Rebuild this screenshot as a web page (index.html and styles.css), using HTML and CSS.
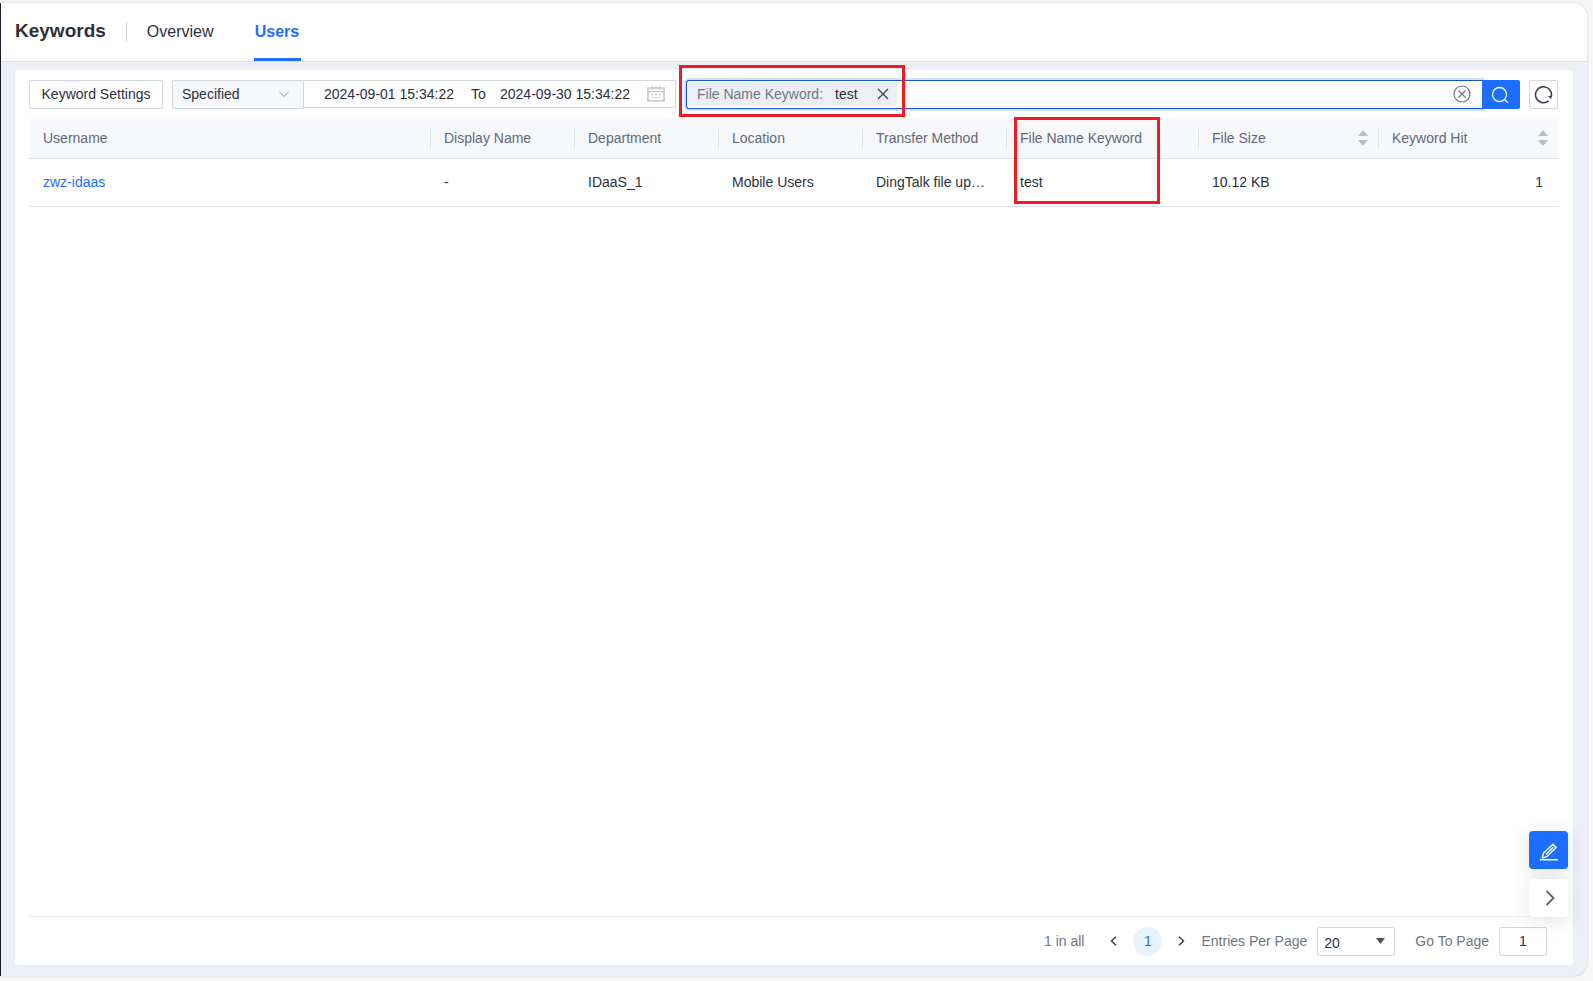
FILE: index.html
```html
<!DOCTYPE html>
<html lang="en">
<head>
<meta charset="utf-8">
<title>Keywords - Users</title>
<link rel="stylesheet" href="styles.css">
</head>
<body>
<div class="app">
  <header class="topbar">
    <h1 class="topbar-title">Keywords</h1>
    <nav class="tabs">
      <a class="tab" href="#overview">Overview</a>
      <a class="tab tab-active" href="#users" aria-current="page">Users</a>
    </nav>
  </header>

  <main class="panel">
    <form class="toolbar">
      <button class="btn" type="button">Keyword Settings</button>

      <div class="period">
        <div class="period-type">
          <select class="period-select" aria-label="Period">
            <option>Specified</option>
          </select>
          <svg class="period-arrow" width="10" height="7" viewBox="0 0 10 7" fill="none" stroke="#b9bdc6" stroke-width="1.2"><path d="M.5 1 5 5.5 9.5 1"/></svg>
        </div>
        <div class="range">
          <input class="range-input" type="text" value="2024-09-01 15:34:22" aria-label="Start time">
          <span class="range-to">To</span>
          <input class="range-input" type="text" value="2024-09-30 15:34:22" aria-label="End time">
          <svg class="range-icon" width="18" height="18" viewBox="0 0 18 18" fill="none" stroke="#c5c7cc"><path d="M1 3h16v13H1z" stroke-width="1.6"/><path d="M1 6.5h16M5.5 1v4M12.5 1v4M9 1v3" stroke-width="1.2"/><path d="M4 9.5h2.4M7.8 9.5h2.4M11.6 9.5H14M4 12.5h2.4M7.8 12.5h2.4M11.6 12.5H14"/></svg>
        </div>
      </div>

      <div class="search">
        <div class="search-field">
          <span class="tag">
            <span class="tag-name">File Name Keyword:</span>
            <span class="tag-value">test</span>
            <button class="icon-btn" type="button" aria-label="Remove filter">
              <svg width="12" height="12" viewBox="0 0 12 12" fill="none" stroke="#3b404c" stroke-width="1.2"><path d="M1 1l10 10M11 1 1 11"/></svg>
            </button>
            <span class="mark mark-tag"></span>
          </span>
          <input class="search-input" type="text" aria-label="Search">
          <button class="icon-btn" type="button" aria-label="Clear search">
            <svg width="18" height="18" viewBox="0 0 18 18" fill="none" stroke="#6d7380" stroke-width="1.2"><circle cx="9" cy="9" r="8"/><path d="M5.5 5.5l7 7M12.5 5.5l-7 7"/></svg>
          </button>
        </div>
        <button class="search-btn" type="button" aria-label="Search">
          <svg width="18" height="18" viewBox="0 0 18 18" fill="none" stroke="#fff" stroke-width="1.3"><circle cx="8.5" cy="8.5" r="7"/><path d="M13.5 13.5 17 16.8"/></svg>
        </button>
      </div>

      <button class="refresh" type="button" aria-label="Refresh">
        <svg width="19" height="19" viewBox="0 0 19 19"><path d="M14.6 15.9A8 8 0 1 1 17.4 11" fill="none" stroke="#3b404c" stroke-width="1.5"/><path d="M13.8 11.2 18.2 10.6 17 14z" fill="#3b404c"/></svg>
      </button>
    </form>

    <div class="table-area">
      <table class="table">
        <colgroup>
          <col>
          <col class="col-s"><col class="col-s"><col class="col-s"><col class="col-s">
          <col class="col-l"><col class="col-m"><col class="col-m">
        </colgroup>
        <thead>
          <tr>
            <th>Username</th>
            <th>Display Name</th>
            <th>Department</th>
            <th>Location</th>
            <th>Transfer Method</th>
            <th class="marked">File Name Keyword<span class="mark mark-column"></span></th>
            <th><div class="sortable">File Size
              <button class="icon-btn" type="button" aria-label="Sort by file size"><svg width="10" height="16" viewBox="0 0 10 16" fill="#b9bdc6"><path d="M0 6 5 0l5 6zM0 10h10l-5 6z"/></svg></button></div></th>
            <th><div class="sortable">Keyword Hit
              <button class="icon-btn" type="button" aria-label="Sort by keyword hit"><svg width="10" height="16" viewBox="0 0 10 16" fill="#b9bdc6"><path d="M0 6 5 0l5 6zM0 10h10l-5 6z"/></svg></button></div></th>
          </tr>
        </thead>
        <tbody>
          <tr>
            <td><a class="link" href="#zwz-idaas">zwz-idaas</a></td>
            <td>-</td>
            <td>IDaaS_1</td>
            <td>Mobile Users</td>
            <td>DingTalk file upload</td>
            <td>test</td>
            <td>10.12 KB</td>
            <td class="num">1</td>
          </tr>
        </tbody>
      </table>
    </div>

    <footer class="pager">
      <span class="pager-total">1 in all</span>
      <nav class="pages">
        <button class="icon-btn page-step" type="button" aria-label="Previous page"><svg width="7" height="10" viewBox="0 0 7 10" fill="none" stroke="#3b404c" stroke-width="1.5"><path d="M6 .7 1.5 5 6 9.3"/></svg></button>
        <button class="page" type="button">1</button>
        <button class="icon-btn page-step" type="button" aria-label="Next page"><svg width="7" height="10" viewBox="0 0 7 10" fill="none" stroke="#3b404c" stroke-width="1.5"><path d="M1 .7 5.5 5 1 9.3"/></svg></button>
      </nav>
      <label for="per-page">Entries Per Page</label>
      <div class="size">
        <select class="size-select" id="per-page"><option>20</option></select>
        <svg class="size-arrow" width="9" height="6" viewBox="0 0 9 6" fill="#4b505c"><path d="M0 0h9L4.500 6z"/></svg>
      </div>
      <label class="goto-label" for="goto">Go To Page</label>
      <input class="goto" id="goto" type="text" value="1">
    </footer>

    <aside class="float">
      <button class="float-btn float-primary" type="button" aria-label="Feedback">
        <svg width="18" height="18" viewBox="0 0 18 18" fill="none" stroke="#fff" stroke-width="1.4" stroke-linejoin="round"><path d="M2.200 15l1.300-5L13 1.200l3.200 3.200-9.300 9.200zM6 11.300l7.400-7.200M0 16.700h18"/></svg>
      </button>
      <button class="float-btn" type="button" aria-label="Collapse">
        <svg width="10" height="16" viewBox="0 0 10 16" fill="none" stroke="#5d6370" stroke-width="1.8"><path d="M1.5 1 8.500 8l-7 7"/></svg>
      </button>
    </aside>
  </main>
</div>
</body>
</html>
```
FILE: styles.css
```css
* { box-sizing: border-box; }

body {
  margin: 0;
  height: 100vh;
  padding: 3px 6px 5px 0;
  display: flex;
  background: #f6f6f6;
  color: #2b303b;
  font: 14px/20px "Liberation Sans", Arial, sans-serif;
}

button, input, select { font: inherit; color: inherit; }
button { cursor: pointer; }
svg { display: block; flex: none; }

.app {
  flex: 1;
  min-width: 0;
  display: flex;
  flex-direction: column;
  background: #eceff8;
  border-left: 1px solid #1b1d29;
  border-radius: 0 14px 14px 0;
  box-shadow: 0 0 2px #b8bac0;
}

/* Top bar */
.topbar {
  flex: none;
  height: 59px;
  padding-left: 14px;
  display: flex;
  align-items: stretch;
  background: #fff;
  border-bottom: 1px solid #dfe2e8;
  border-radius: 0 14px 0 0;
}
.topbar-title {
  margin: 0;
  font-size: 19px;
  line-height: 55px;
}
.tabs {
  display: flex;
  gap: 40px;
  margin-left: 20px;
  padding-left: 21px;
  background: linear-gradient(#d3d6de, #d3d6de) 0 19px / 1px 19px no-repeat;
}
.tab {
  color: inherit;
  font-size: 16px;
  line-height: 57px;
  text-decoration: none;
}
.tab-active {
  min-width: 47px;
  color: #1c6eff;
  font-weight: bold;
  text-align: center;
  border-bottom: 3px solid #1c6eff;
  border-radius: 2px 2px 0 0;
}

/* Content panel */
.panel {
  position: relative;
  flex: 1;
  min-height: 0;
  margin: 8px 14px 11px;
  padding: 10px 15px 0 14px;
  display: flex;
  flex-direction: column;
  background: #fff;
  border-radius: 4px;
}

/* Filters */
.toolbar { display: flex; gap: 9px; margin-bottom: 10px; }
.btn, .refresh {
  height: 29px;
  background: #fff;
  border: 1px solid #d3d6de;
  border-radius: 2px;
}
.btn { width: 134px; padding: 0 0 2px; white-space: nowrap; }
.refresh { width: 29px; padding: 0; display: grid; place-items: center; }

.period { display: flex; align-items: flex-start; }
.period-type { position: relative; }
.period-select {
  appearance: none;
  width: 132px;
  height: 29px;
  padding: 0 9px 2px;
  background: #f7f8fc;
  border: 1px solid #d3d6de;
  border-radius: 2px 0 0 2px;
}
.period-arrow { position: absolute; right: 15px; top: 11px; pointer-events: none; }
.range {
  width: 372px;
  height: 28px;
  padding: 0 10px 0 20px;
  display: flex;
  align-items: center;
  border: 1px solid #d3d6de;
  border-left: 0;
  border-radius: 0 2px 2px 0;
}
.range-input { flex: 1; min-width: 0; padding: 0; border: 0; outline: 0; background: none; }
.range-to { width: 29px; }

.search { flex: 1; min-width: 0; display: flex; margin-left: 1px; }
.search-field {
  flex: 1;
  min-width: 0;
  height: 29px;
  padding: 0 11px 1px 1px;
  display: flex;
  align-items: center;
  border: 1px solid #1257d8;
  border-right: 0;
  border-radius: 3px 0 0 3px;
  box-shadow: 0 0 0 2px #d1e2ff;
}
.tag {
  position: relative;
  flex: none;
  width: 209px;
  height: 24px;
  padding: 0 8px 0 9px;
  display: flex;
  align-items: center;
  background: #eceff7;
  border-radius: 2px;
}
.tag-name { color: #70757f; margin-right: 12px; }
.tag-value { flex: 1; }
.icon-btn { padding: 0; border: 0; background: none; }
.search-input { flex: 1; min-width: 0; border: 0; outline: 0; background: none; }
.search-btn {
  position: relative;
  width: 38px;
  height: 29px;
  padding: 0 2px 0 0;
  display: grid;
  place-items: center;
  background: #1c6eff;
  border: 0;
  border-radius: 0 2px 2px 0;
}

/* Red highlight frames */
.mark { position: absolute; border: 3px solid #ed1c24; pointer-events: none; }
.mark-tag { inset: -17px -8px -11px -9px; }
.mark-column { top: -2px; left: 8px; width: 146px; height: 87px; }

/* Results */
.table-area { flex: 1; min-height: 0; }
.table { width: 100%; table-layout: fixed; border-collapse: separate; border-spacing: 0; }
.col-s { width: 144px; }
.col-m { width: 180px; }
.col-l { width: 192px; }
.table th, .table td {
  padding: 0 18px 2px 14px;
  border-bottom: 1px solid #dfe2e8;
  text-align: left;
  white-space: nowrap;
}
.table th {
  height: 40px;
  color: #626975;
  font-weight: normal;
  background: #f7f8fc;
}
.table th + th { background: linear-gradient(#dfe2e8, #dfe2e8) 0 10px / 1px 20px no-repeat #f7f8fc; }
.table td { height: 48px; overflow: hidden; text-overflow: ellipsis; }
.table .marked { position: relative; }
.table .num { padding-right: 15px; text-align: right; }
.sortable { display: flex; justify-content: space-between; align-items: center; margin-right: -8px; }
.link { color: #1c6eff; text-decoration: none; }

/* Pagination */
.pager {
  flex: none;
  height: 49px;
  padding-right: 11px;
  display: flex;
  align-items: center;
  justify-content: flex-end;
  color: #70757f;
  border-top: 1px solid #e8e9ec;
}
.pages { display: flex; align-items: center; gap: 16px; margin: 0 16px 0 26px; }
.page {
  width: 29px;
  height: 29px;
  padding: 0;
  color: #1c6eff;
  background: #e6f3ff;
  border: 0;
  border-radius: 50%;
}
.size { position: relative; margin: 0 20px 0 10px; color: #2b303b; }
.size-select {
  display: block;
  appearance: none;
  width: 78px;
  height: 29px;
  padding: 3px 6px 0;
  background: #fff;
  border: 1px solid #d3d6de;
  border-radius: 2px;
}
.size-arrow { position: absolute; right: 10px; top: 11px; pointer-events: none; }
.goto-label { margin-right: 10px; }
.goto {
  width: 48px;
  height: 29px;
  padding: 0;
  text-align: center;
  color: #2b303b;
  background: none;
  border: 1px solid #d3d6de;
  border-radius: 2px;
}

/* Floating actions */
.float { position: absolute; right: 5px; bottom: 48px; display: grid; gap: 10px; }
.float-btn {
  width: 39px;
  height: 38px;
  padding: 0 0 1px 3px;
  display: grid;
  place-items: center;
  background: #fff;
  border: 0;
  border-radius: 4px;
  box-shadow: 0 4px 20px rgba(40, 50, 60, .13);
}
.float-primary { padding: 3px 0 0; background: #1c6eff; }
```
